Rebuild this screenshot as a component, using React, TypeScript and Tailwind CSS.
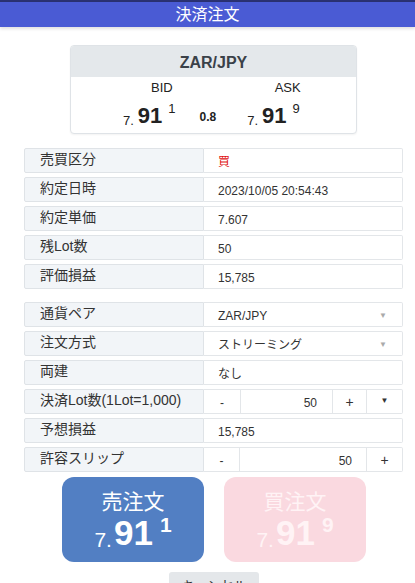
import type {ReactNode} from 'react'

const font = {fontFamily: '"Liberation Sans", "Noto Sans CJK JP", sans-serif'}

function Price({dim = false, big = false, sub, main, sup}: {dim?: boolean; big?: boolean; sub: string; main: string; sup: string}) {
    if (big) {
        return (
            <div className={`flex items-start leading-none ${dim ? 'text-[#fff3f5]' : 'text-white'}`}>
                <span className="mt-[14px] text-[21px]">{sub}</span>
                <span className="ml-[2px] text-[35px] font-bold">{main}</span>
                <span className="ml-[7px] mt-[-1px] text-[21px] font-bold">{sup}</span>
            </div>
        )
    }
    return (
        <div className="flex items-start leading-none text-[#222]">
            <span className="mt-[9px] text-[13px]">{sub}</span>
            <span className="ml-[4px] text-[22px] font-bold">{main}</span>
            <span className="ml-[6px] mt-[-3px] text-[13px]">{sup}</span>
        </div>
    )
}

function Row({label, children}: {label: string; children: ReactNode}) {
    return (
        <div className="flex h-[25px]">
            <div className="flex w-[180px] shrink-0 items-center rounded-l-[2px] border border-[#dfe3e7] bg-[#f2f5f8] pb-[2px] pl-[15px] text-[14px] text-[#333]">
                {label}
            </div>
            <div className="flex min-w-0 flex-1 items-center rounded-r-[2px] border border-l-0 border-[#e3e6e9] bg-white text-[12px] text-[#333]">
                {children}
            </div>
        </div>
    )
}

function Text({children, className = ''}: {children: ReactNode; className?: string}) {
    return <span className={`pl-[14px] pt-[3px] ${className}`}>{children}</span>
}

function Select({value}: {value: string}) {
    return (
        <div className="flex w-full items-center justify-between pl-[14px] pr-[15px] pt-[3px]">
            <span>{value}</span>
            <span className="text-[8px] text-[#aaa]">▼</span>
        </div>
    )
}

function Cell({children, className = ''}: {children: ReactNode; className?: string}) {
    return <div className={`flex h-full shrink-0 items-center border-r border-[#e3e6e9] pt-[2px] ${className}`}>{children}</div>
}

export default function App() {
    return (
        <div className="h-[583px] w-[415px] overflow-hidden bg-white" style={font}>
            <div className="h-[2px] bg-[#2a3172]" />
            <div className="flex h-[25px] items-center justify-center bg-[#4a5bd4] text-[16px] text-white shadow-[0_2px_3px_rgba(0,0,0,0.12)]">
                決済注文
            </div>

            <div className="ml-[70px] mt-[18px] w-[287px] overflow-hidden rounded-[4px] border border-[#dfe3e7] bg-white shadow-[0_1px_2px_rgba(0,0,0,0.05)]">
                <div className="flex h-[31px] items-center justify-center bg-[#e4e8eb] pt-[2px] text-[16px] font-bold text-[#3a4148]">ZAR/JPY</div>
                <div className="flex h-[56px] flex-col">
                    <div className="mt-[1px] flex text-[13px] text-[#222]">
                        <span className="ml-[80px]">BID</span>
                        <span className="ml-[102px]">ASK</span>
                    </div>
                    <div className="mt-[7px] flex items-end">
                        <div className="ml-[52px]">
                            <Price sub="7." main="91" sup="1" />
                        </div>
                        <span className="mb-[1px] ml-[24px] text-[12px] font-bold text-[#222]">0.8</span>
                        <div className="ml-[31px]">
                            <Price sub="7." main="91" sup="9" />
                        </div>
                    </div>
                </div>
            </div>

            <div className="ml-[24px] mt-[14px] flex w-[379px] flex-col gap-[4px]">
                <Row label="売買区分">
                    <Text className="text-[#e01010]">買</Text>
                </Row>
                <Row label="約定日時">
                    <Text>2023/10/05 20:54:43</Text>
                </Row>
                <Row label="約定単価">
                    <Text>7.607</Text>
                </Row>
                <Row label="残Lot数">
                    <Text>50</Text>
                </Row>
                <Row label="評価損益">
                    <Text>15,785</Text>
                </Row>
            </div>

            <div className="ml-[24px] mt-[13px] flex w-[379px] flex-col gap-[4px]">
                <Row label="通貨ペア">
                    <Select value="ZAR/JPY" />
                </Row>
                <Row label="注文方式">
                    <Select value="ストリーミング" />
                </Row>
                <Row label="両建">
                    <Text>なし</Text>
                </Row>
                <Row label="決済Lot数(1Lot=1,000)">
                    <Cell className="w-[37px] justify-center">-</Cell>
                    <Cell className="w-[92px] justify-end pr-[15px]">50</Cell>
                    <Cell className="w-[34px] justify-center text-[14px]">+</Cell>
                    <div className="flex h-full flex-1 items-start justify-center pt-[5px] text-[8px]">▼</div>
                </Row>
                <Row label="予想損益">
                    <Text>15,785</Text>
                </Row>
                <Row label="許容スリップ">
                    <Cell className="w-[36px] justify-center">-</Cell>
                    <Cell className="w-[127px] justify-end pr-[14px]">50</Cell>
                    <div className="flex h-full flex-1 items-center justify-center pt-[2px] text-[14px]">+</div>
                </Row>
            </div>

            <div className="ml-[62px] mt-[5px] flex w-[304px] gap-[20px]">
                <button className="flex h-[85px] w-[142px] flex-col items-center rounded-[12px] bg-[#527fc3] pt-[14px]">
                    <span className="text-[21px] leading-none text-white">売注文</span>
                    <div className="mt-[3px]">
                        <Price big sub="7." main="91" sup="1" />
                    </div>
                </button>
                <button className="flex h-[85px] w-[142px] flex-col items-center rounded-[12px] bg-[#fad9e0] pt-[14px]">
                    <span className="text-[21px] leading-none text-[#fff3f5]">買注文</span>
                    <div className="mt-[3px]">
                        <Price big dim sub="7." main="91" sup="9" />
                    </div>
                </button>
            </div>

            <div className="ml-[169px] mt-[10px] flex h-[30px] w-[90px] items-start justify-center rounded-[3px] bg-[#e4e7ea] pt-[4px] text-[13px] text-[#333]">
                キャンセル
            </div>
        </div>
    )
}
